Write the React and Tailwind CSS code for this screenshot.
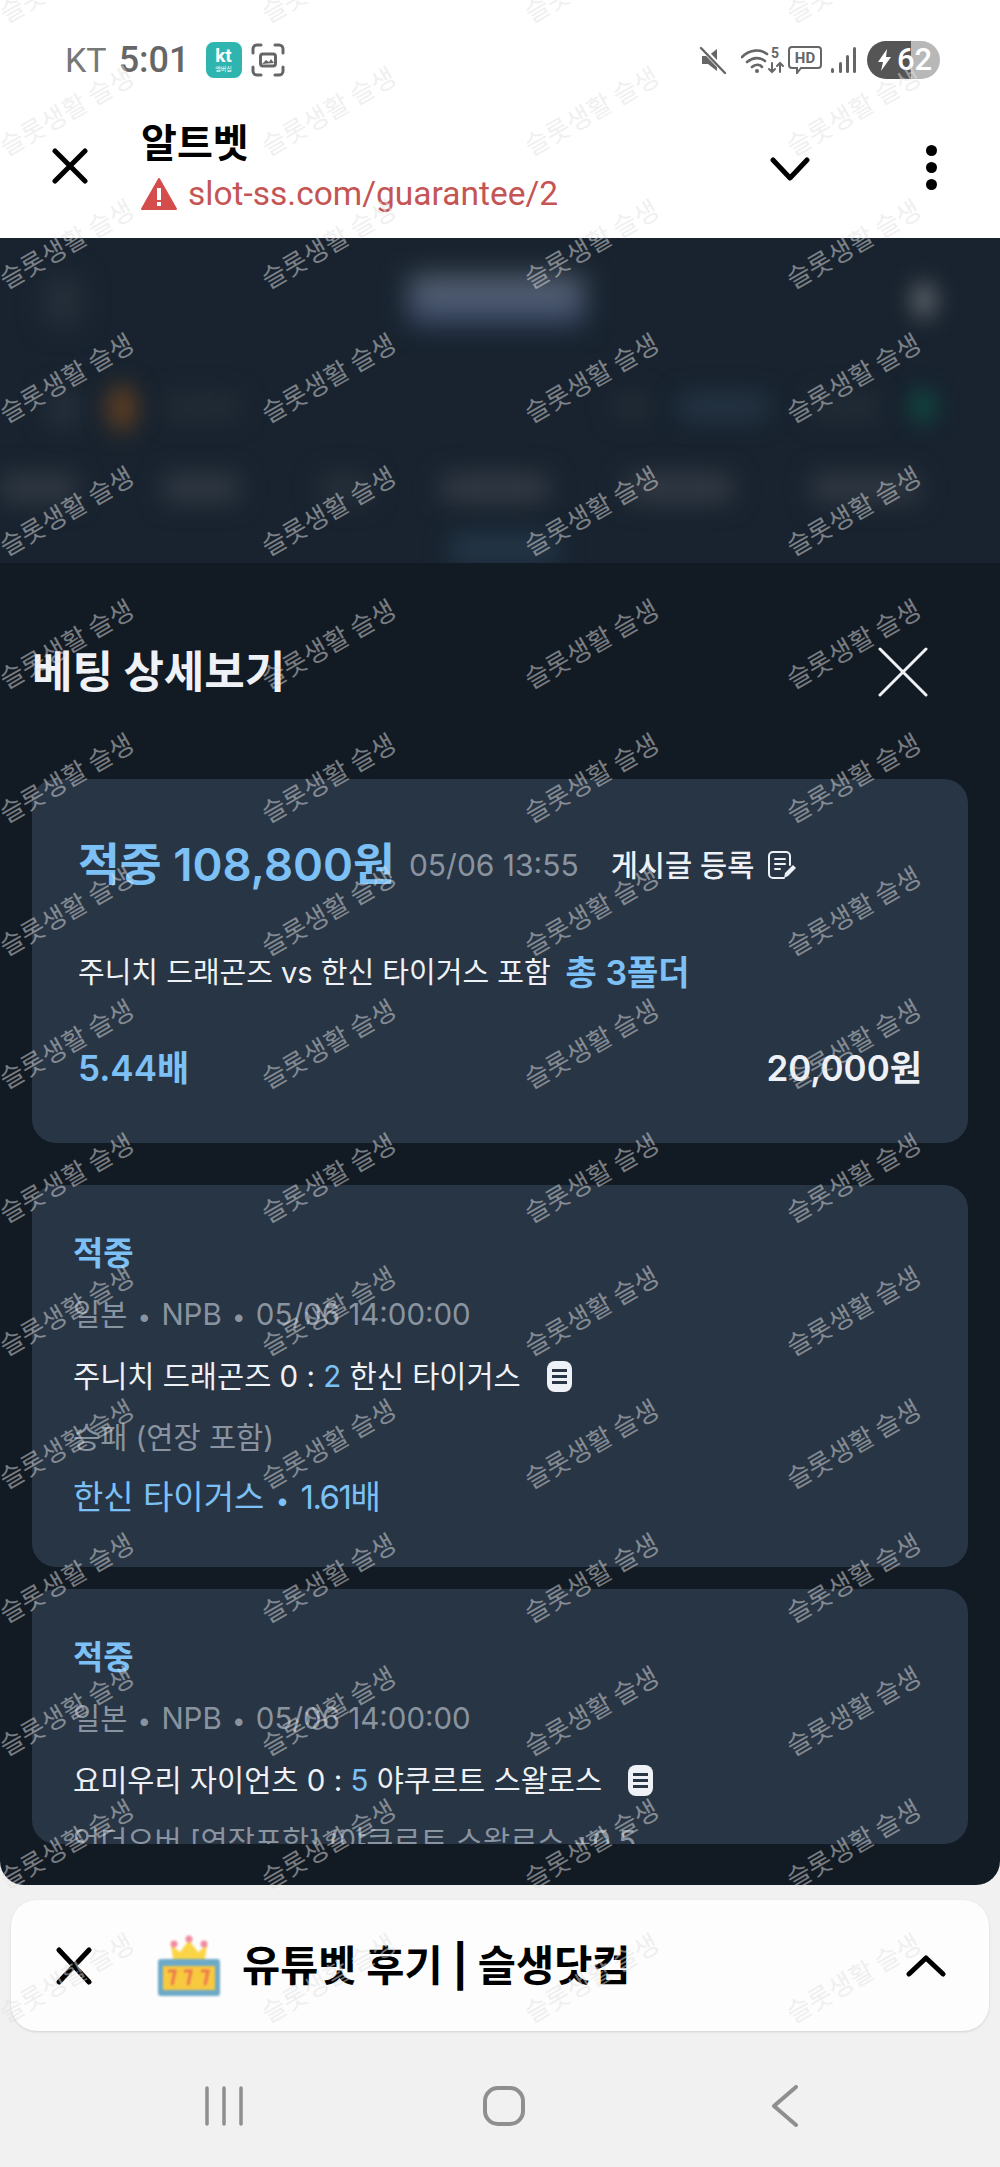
import React from 'react';

const KR = 'font-["Inter","Noto_Sans_CJK_KR",sans-serif]';

// repeated stamp over the whole screenshot, 4 columns by 16 rows
function Watermark() {
  const stamps = Array.from({ length: 64 });
  return (
    <div className="absolute left-[-66px] top-[-90px] grid grid-cols-[repeat(4,262.5px)] auto-rows-[133.33px] pointer-events-none">
      {stamps.map((_, i) => (
        <div key={i} className="flex items-center justify-center">
          <span className='-rotate-30 whitespace-nowrap text-[26px] leading-none text-[rgba(225,225,225,0.5)] font-["Noto_Sans_CJK_KR",sans-serif]'>
            슬롯생활 슬생
          </span>
        </div>
      ))}
    </div>
  );
}

function StatusBar() {
  return (
    <div className='h-[85px] flex items-center pt-[34px] pl-[65px] pr-[60px] font-["Roboto",sans-serif]'>
      <span className="text-[34px] leading-none text-[#777]">KT</span>
      <span className="ml-[12px] text-[36px] leading-none font-medium text-[#666]">5:01</span>
      <span className="ml-[16px] w-[36px] h-[36px] rounded-[8px] bg-[#2fb5b0] flex flex-col items-center justify-center text-white">
        <span className="text-[19px] leading-[18px] font-bold">kt</span>
        <span className='text-[6px] leading-[8px] font-["Noto_Sans_CJK_KR",sans-serif]'>멤버십</span>
      </span>
      <svg className="ml-[9px]" width="34" height="34" viewBox="0 0 34 34" fill="none" stroke="#666" strokeWidth="3" strokeLinecap="round">
        <path d="M2 10V6a4 4 0 0 1 4-4h4M24 2h4a4 4 0 0 1 4 4v4M32 24v4a4 4 0 0 1-4 4h-4M10 32H6a4 4 0 0 1-4-4v-4" />
        <rect x="9.5" y="11" width="15" height="12" rx="2.5" />
        <path d="M11 21l4-4 3 2 2-3 3 4z" fill="#666" stroke="none" />
      </svg>
      <div className="ml-auto flex items-center">
        {/* mute */}
        <svg width="28" height="28" viewBox="0 0 28 28">
          <path d="M3 10h6l9-7v22l-9-7H3z" fill="#666" />
          <path d="M3 2l23 24" stroke="#fff" strokeWidth="5" />
          <path d="M2 2l24 25" stroke="#666" strokeWidth="2.4" strokeLinecap="round" />
        </svg>
        {/* wifi + 5 */}
        <svg className="ml-[14px]" width="44" height="30" viewBox="0 0 44 30" fill="none" stroke="#666" strokeWidth="2.6" strokeLinecap="round">
          <path d="M1 12C9 4 20 4 26 9M6 17c6-5 13-5 18-1M11 22c3-3 8-3 10 0" />
          <circle cx="16" cy="26" r="2" fill="#666" stroke="none" />
          <path d="M31 18v9M28 24l3 3 3-3M39 27v-9M36 21l3-3 3 3" strokeWidth="2" />
          <text x="30" y="13" fontSize="14" fontWeight="700" fill="#666" stroke="none" fontFamily="Roboto">5</text>
        </svg>
        {/* HD bubble */}
        <svg className="ml-[3px]" width="34" height="28" viewBox="0 0 34 28" fill="none" stroke="#666" strokeWidth="2">
          <path d="M4 1h26a3 3 0 0 1 3 3v15a3 3 0 0 1-3 3H13l-4 5v-5H4a3 3 0 0 1-3-3V4a3 3 0 0 1 3-3z" />
          <text x="17" y="17" textAnchor="middle" fontSize="15" fontWeight="700" fill="#666" stroke="none" fontFamily="Roboto">HD</text>
        </svg>
        {/* signal */}
        <svg className="ml-[8px]" width="27" height="28" viewBox="0 0 27 28" fill="#666">
          <rect x="1" y="22" width="3" height="5" rx="1.5" />
          <rect x="9" y="16" width="3" height="11" rx="1.5" />
          <rect x="16" y="9" width="3" height="18" rx="1.5" />
          <rect x="23" y="1" width="3" height="26" rx="1.5" />
        </svg>
        {/* battery */}
        <div className="ml-[10px] w-[73px] h-[38px] rounded-full overflow-hidden flex relative">
          <div className="w-[44px] bg-[#555]" />
          <div className="flex-1 bg-[#b8b8b8]" />
          <div className="absolute inset-0 flex items-center pl-[11px] text-white">
            <svg width="14" height="22" viewBox="0 0 14 22" fill="#fff"><path d="M9 0L0 13h5l-2 9 10-14H8z" /></svg>
            <span className="ml-[5px] text-[31px] leading-none font-medium">62</span>
          </div>
        </div>
      </div>
    </div>
  );
}

function BrowserHeader() {
  return (
    <div className="h-[153px] flex pl-[52px] pr-[63px] relative">
      <svg className="mt-[63px]" width="36" height="36" viewBox="0 0 36 36" stroke="#000" strokeWidth="5" strokeLinecap="round">
        <path d="M3 3l30 30M33 3L3 33" />
      </svg>
      <div className="ml-[53px] pt-[35px]">
        <div className={`${KR} text-[39px] leading-[46px] font-bold text-black`}>알트벳</div>
        <div className="mt-[10px] flex items-center">
          <svg width="36" height="32" viewBox="0 0 36 32">
            <path d="M18 1L35 31H1z" fill="#d54c4c" stroke="#d54c4c" strokeWidth="2" strokeLinejoin="round" />
            <rect x="16" y="10" width="4" height="12" fill="#fff" />
            <rect x="16" y="24" width="4" height="4" fill="#fff" />
          </svg>
          <span className='ml-[11px] text-[33.5px] leading-[36px] text-[#c55454] font-["Roboto",sans-serif]'>slot-ss.com/guarantee/2</span>
        </div>
      </div>
      <svg className="ml-auto mt-[72px]" width="40" height="24" viewBox="0 0 40 24" fill="none" stroke="#000" strokeWidth="5" strokeLinecap="round" strokeLinejoin="round">
        <path d="M3 3l17 18L37 3" />
      </svg>
      <div className="ml-[116px] mt-[60px] flex flex-col gap-[6px]">
        <span className="block w-[11px] h-[11px] rounded-full bg-black" />
        <span className="block w-[11px] h-[11px] rounded-full bg-black" />
        <span className="block w-[11px] h-[11px] rounded-full bg-black" />
      </div>
    </div>
  );
}

// the site's own header sits blurred behind the sheet
function BlurredSite() {
  return (
    <div className="h-[325px] overflow-hidden bg-[#18232f] pt-[32px]">
      <div className="flex h-[70px]">
        <div className="ml-[47px] mt-[8px] w-[32px] h-[46px] bg-[#27323d] blur-[14px]" />
        <div className="ml-[330px] mt-[6px] w-[175px] h-[48px] bg-gradient-to-b from-[#606a77] to-[#39496a] blur-[14px]" />
        <div className="ml-[328px] mt-[12px] w-[24px] h-[36px] rounded-full bg-[#5c6269] blur-[11px]" />
      </div>
      <div className="flex h-[57px] mt-[40px]">
        <div className="ml-[48px] mt-[12px] w-[30px] h-[32px] bg-[#27323d] blur-[13px]" />
        <div className="ml-[31px] mt-[6px] w-[26px] h-[44px] rounded-full bg-[#6a4220] blur-[12px]" />
        <div className="ml-[30px] mt-[16px] w-[74px] h-[22px] bg-[#242e38] blur-[13px]" />
        <div className="ml-[376px] mt-[16px] w-[34px] h-[22px] bg-[#242e38] blur-[13px]" />
        <div className="ml-[30px] mt-[16px] w-[88px] h-[22px] bg-[#273849] blur-[13px]" />
        <div className="ml-[44px] mt-[16px] w-[68px] h-[22px] bg-[#242e38] blur-[13px]" />
        <div className="ml-[32px] mt-[10px] w-[24px] h-[32px] rounded-full bg-[#0e4c44] blur-[11px]" />
      </div>
      <div className="flex h-[37px] mt-[36px]">
        <div className="w-[76px] h-[26px] mt-[2px] bg-[#333b45] blur-[13px]" />
        <div className="ml-[88px] w-[74px] h-[26px] mt-[2px] bg-[#333b45] blur-[13px]" />
        <div className="ml-[82px] w-[50px] h-[26px] mt-[2px] bg-[#28323c] blur-[13px]" />
        <div className="ml-[72px] w-[106px] h-[26px] mt-[2px] bg-[#363d47] blur-[13px]" />
        <div className="ml-[78px] w-[106px] h-[26px] mt-[2px] bg-[#363d47] blur-[13px]" />
        <div className="ml-[80px] w-[106px] h-[26px] mt-[2px] bg-[#333b45] blur-[13px]" />
      </div>
      <div className="ml-[450px] mt-[24px] w-[108px] h-[30px] bg-[#243748] blur-[12px]" />
    </div>
  );
}

function WriteIcon() {
  return (
    <svg width="30" height="30" viewBox="0 0 30 30" fill="none" stroke="#eef1f5" strokeWidth="2" strokeLinecap="round">
      <path d="M17 28H6a4 4 0 0 1-4-4V6a4 4 0 0 1 4-4h13a4 4 0 0 1 4 4v9" />
      <path d="M8 9h10M8 14h10M8 19h5" />
      <path d="M17 28l1-5 8-8 3 3-8 8z" fill="#eef1f5" stroke="none" />
    </svg>
  );
}

function MarketIcon() {
  return (
    <span className="ml-[26px] w-[25px] h-[31px] shrink-0 rounded-[8px] bg-[#eef1f5] flex flex-col items-center justify-center gap-[3px]">
      <span className="block w-[15px] h-[3px] bg-[#283545]" />
      <span className="block w-[15px] h-[3px] bg-[#283545]" />
      <span className="block w-[15px] h-[3px] bg-[#283545]" />
    </span>
  );
}

function Dot() {
  return <span className="mx-[2px] text-[24px] leading-none">•</span>;
}

function Pick({ className, score, home, away, market, pick }) {
  return (
    <div className={`rounded-[24px] bg-[#283545] px-[41px] ${className}`}>
      <div className="pt-[44px] text-[33px] leading-[48px] font-bold text-[#7cc0f5]">적중</div>
      <div className="mt-[16px] text-[29.5px] leading-[42px] text-[#8a94a0]">일본 <Dot /> NPB <Dot /> 05/06 14:00:00</div>
      <div className="mt-[20px] flex items-center h-[42px] text-[29.5px] leading-[42px] text-[#eef1f5]">
        <span>{home} 0 : <span className="text-[#7cc0f5]">{score}</span> {away}</span>
        <MarketIcon />
      </div>
      <div className="mt-[19px] text-[29.5px] leading-[42px] text-[#8a94a0] whitespace-nowrap">{market}</div>
      {pick && (
        <div className="mt-[15px] text-[33px] leading-[48px] text-[#7cc0f5]">
          {pick} <Dot /> <span className="tracking-[-1.5px]">1.61배</span>
        </div>
      )}
    </div>
  );
}

function BetSheet() {
  return (
    <div className={`${KR} h-[1322px] rounded-b-[24px] bg-[#121a24] overflow-hidden`}>
      <div className="h-[216px] flex pl-[32px] pr-[72px]">
        <h1 className="mt-[82px] text-[44px] leading-[54px] font-bold text-[#eef1f5] whitespace-nowrap">베팅 상세보기</h1>
        <svg className="ml-auto mt-[84px]" width="50" height="50" viewBox="0 0 50 50" stroke="#eef1f5" strokeWidth="3" strokeLinecap="round">
          <path d="M2 2l46 46M48 2L2 48" />
        </svg>
      </div>
      <div className="mx-[32px] h-[1065px] overflow-hidden">
        <div className="h-[364px] rounded-[24px] bg-[#283545] px-[46px]">
          <div className="pt-[56px] flex items-center h-[116px] whitespace-nowrap">
            <span className="text-[45.5px] leading-[60px] font-semibold text-[#7cc0f5]">적중 108,800원</span>
            <span className="ml-[14px] text-[30px] leading-[40px] text-[#8a94a0]">05/06 13:55</span>
            <span className="ml-[32px] text-[29.5px] leading-[40px] font-medium text-[#eef1f5]">게시글 등록</span>
            <span className="ml-[13px] flex"><WriteIcon /></span>
          </div>
          <div className="mt-[53px] flex items-center h-[50px] whitespace-nowrap">
            <span className="text-[29px] leading-[42px] text-[#eef1f5]">주니치 드래곤즈 vs 한신 타이거스 포함</span>
            <span className="ml-[15px] text-[34px] leading-[42px] font-semibold text-[#7cc0f5]">총 3폴더</span>
          </div>
          <div className="mt-[45px] flex justify-between items-center h-[50px] text-[35px] leading-[50px] font-semibold">
            <span className="text-[#7cc0f5]">5.44배</span>
            <span className="text-[#eef1f5]">20,000원</span>
          </div>
        </div>
        <Pick
          className="mt-[42px] h-[382px]"
          home="주니치 드래곤즈"
          score="2"
          away="한신 타이거스"
          market="승패 (연장 포함)"
          pick="한신 타이거스"
        />
        <Pick
          className="mt-[22px] h-[255px] overflow-hidden"
          home="요미우리 자이언츠"
          score="5"
          away="야쿠르트 스왈로스"
          market="언더오버 [연장포함] (야쿠르트 스왈로스 +0.5"
        />
      </div>
    </div>
  );
}

function SlotIcon() {
  return (
    <svg width="64" height="62" viewBox="0 0 64 62" className="blur-[1px]">
      <path d="M16 24l-2-14 9 7 9-12 9 12 9-7-2 14z" fill="#fbd547" />
      <circle cx="17" cy="9" r="3.5" fill="#f08aa0" />
      <circle cx="32" cy="4" r="3.5" fill="#f08aa0" />
      <circle cx="47" cy="9" r="3.5" fill="#f08aa0" />
      <rect x="1" y="24" width="62" height="37" rx="3" fill="#6ea9c7" />
      <rect x="6" y="31" width="52" height="24" fill="#f7c93f" />
      <path d="M11 36h7l-3 14M27 36h7l-3 14M44 36h7l-3 14" fill="none" stroke="#ec7a4c" strokeWidth="3" />
    </svg>
  );
}

function TabBar() {
  return (
    <div className={`${KR} mx-[11px] mt-[15px] h-[131px] rounded-[26px] bg-[#fdfdfd] shadow-sm flex items-center pl-[45px] pr-[43px]`}>
      <svg width="36" height="38" viewBox="0 0 36 38" stroke="#000" strokeWidth="5" strokeLinecap="round">
        <path d="M3 3l30 32M33 3L3 35" />
      </svg>
      <span className="ml-[65px] flex"><SlotIcon /></span>
      <span className="ml-[21px] text-[41.5px] leading-[48px] font-bold text-black whitespace-nowrap">유튜벳 후기 | 슬생닷컴</span>
      <svg className="ml-auto" width="40" height="22" viewBox="0 0 40 22" fill="none" stroke="#000" strokeWidth="5" strokeLinecap="round" strokeLinejoin="round">
        <path d="M3 19L20 3l17 16" />
      </svg>
    </div>
  );
}

function NavBar() {
  return (
    <div className="mt-[55px] flex items-center h-[40px] pl-[205px]">
      <svg width="38" height="40" viewBox="0 0 38 40" stroke="#8f8f8f" strokeWidth="3.5" strokeLinecap="round">
        <path d="M2 2v36M19 2v36M36 2v36" />
      </svg>
      <svg className="ml-[240px]" width="42" height="40" viewBox="0 0 42 40" fill="none" stroke="#8f8f8f" strokeWidth="4">
        <rect x="2" y="2" width="38" height="36" rx="13" />
      </svg>
      <svg className="ml-[246px]" width="28" height="42" viewBox="0 0 28 42" fill="none" stroke="#8f8f8f" strokeWidth="4" strokeLinecap="round" strokeLinejoin="round">
        <path d="M25 2L3 21l22 19" />
      </svg>
    </div>
  );
}

export default function App() {
  return (
    <div className="relative w-[1000px] h-[2167px] overflow-hidden bg-[#f1f1f1]">
      <div className="bg-white">
        <StatusBar />
        <BrowserHeader />
      </div>
      <BlurredSite />
      <BetSheet />
      <TabBar />
      <NavBar />
      <Watermark />
    </div>
  );
}
